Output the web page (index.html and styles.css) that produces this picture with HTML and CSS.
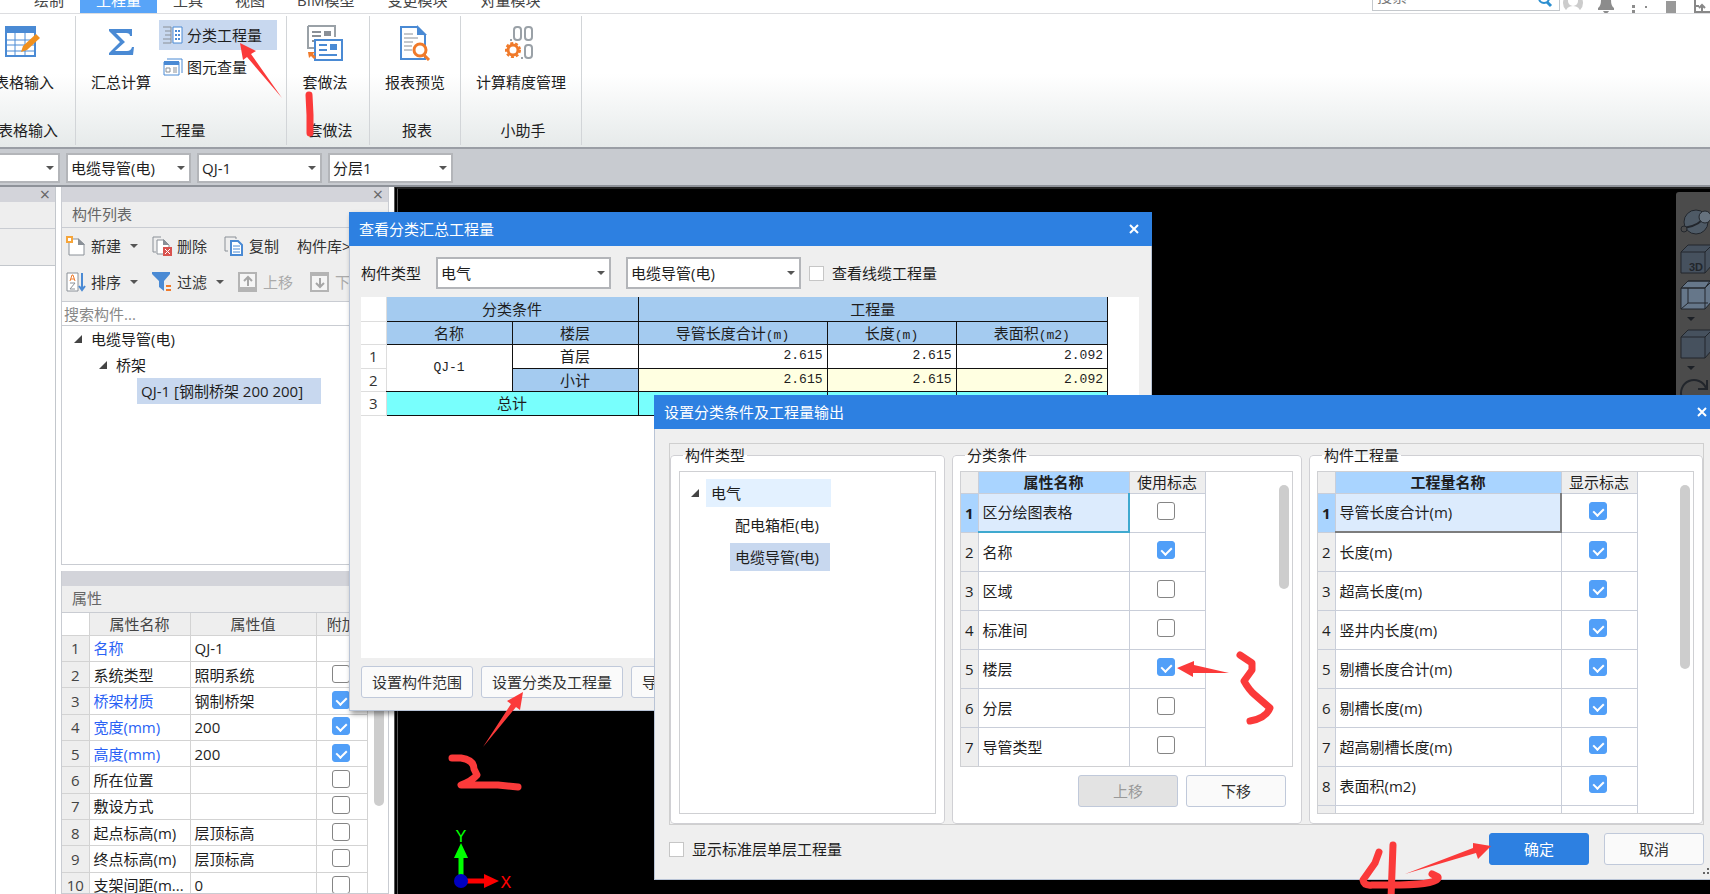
FILE: index.html
```html
<!DOCTYPE html>
<html lang="zh-CN">
<head>
<meta charset="utf-8">
<title>查看分类汇总工程量</title>
<link rel="stylesheet" href="styles.css">
</head>
<body>
<div class="app">
  <header class="tabs">
    <nav class="tab-list">
      <button class="tab tab-first">绘制</button>
      <button class="tab tab-active">工程量</button>
      <button class="tab">工具</button>
      <button class="tab">视图</button>
      <button class="tab">BIM模型</button>
      <button class="tab">变更模块</button>
      <button class="tab">对量模块</button>
    </nav>
    <div class="tab-tools">
      <div class="top-search">
        <input class="top-input" type="text" placeholder="搜索" aria-label="搜索">
        <svg width="16" height="16" viewBox="0 0 16 16"><circle cx="7" cy="6" r="5" fill="none" stroke="#2b8fd0" stroke-width="2"/><path d="M10 10l4 4" stroke="#2b8fd0" stroke-width="3"/></svg>
      </div>
      <svg class="top-icons" width="150" height="20" viewBox="0 0 150 20">
        <circle cx="13" cy="6" r="10" fill="#ccc"/><circle cx="13" cy="4" r="5" fill="#fff"/><path d="M5 17q1-8 8-8t8 8z" fill="#fff"/>
        <path d="M38 11q3-2 3-8h10q0 6 3 8v2H38zM43 14h6q-3 5-6 0z" fill="#8c8c8c"/>
        <path d="M72 8h3v3h-3zM72 13h3v3h-3zM85 9h2v2h-2z" fill="#8c8c8c"/>
        <path d="M106 4h10v12h-10z" fill="#999"/>
        <path d="M135 1v14h16M135 9h4M142 15V8m-3 3l3-3 3 3" fill="none" stroke="#888" stroke-width="2"/>
      </svg>
    </div>
  </header>

  <section class="ribbon">
    <div class="group group-a">
      <div class="group-row">
        <button class="big">
          <svg width="36" height="32" viewBox="0 0 36 32"><path d="M1 2h29v29H1z" fill="#fff" stroke="#4a8ad4" stroke-width="2"/><path d="M0 1h31v7H0z" fill="#4a8ad4"/><path d="M1 15h29M1 20h29M1 26h29M10 8v22M20 8v22" stroke="#4a8ad4" stroke-width="1"/><path d="M16 27l2-6L31 9l4 4-13 12z" fill="#f0901e"/></svg>
          <span>表格输入</span>
        </button>
      </div>
      <div class="group-name">表格输入</div>
    </div>
    <div class="group group-b">
      <div class="group-row">
        <button class="big">
          <svg width="36" height="32" viewBox="0 0 36 32"><path d="M6 4h23v7h-2q0-3-4-3H13l9 9-10 9h12q4 0 5-4h2l-1 8H6v-2l11-11L6 6z" fill="#4a8ad4"/></svg>
          <span>汇总计算</span>
        </button>
        <div class="small-list">
          <button class="small small-on">
            <svg width="20" height="18" viewBox="0 0 20 18"><path d="M0 1h8M2 5h6M2 9h6M0 13h8M0 17h8M8 1v16" stroke="#8a9097" stroke-width="1" fill="none"/><path d="M10 1h9v16h-9z" fill="#fff" stroke="#4a8ad4" stroke-width="1"/><path d="M12 4h2v2h-2zM15 4h2v2h-2zM12 8h2v2h-2zM15 8h2v2h-2zM12 12h2v2h-2zM15 12h2v2h-2z" fill="#4a8ad4"/></svg>
            <span>分类工程量</span>
          </button>
          <button class="small">
            <svg width="20" height="18" viewBox="0 0 20 18"><path d="M4 1h15v14" fill="none" stroke="#4a8ad4" stroke-width="1"/><path d="M1 4h15v13H1z" fill="#fff" stroke="#4a8ad4" stroke-width="1"/><path d="M1 3h15v4H1z" fill="#4a8ad4"/><path d="M3 10h4v4H3zM10 10h4M10 12h4M10 14h4" fill="none" stroke="#8a9097"/></svg>
            <span>图元查量</span>
          </button>
        </div>
      </div>
      <div class="group-name">工程量</div>
    </div>
    <div class="group group-c">
      <div class="group-row">
        <button class="big">
          <svg width="36" height="36" viewBox="0 0 36 36"><path d="M1 1h27v11M1 1v22h6" fill="#fff" stroke="#9aa1a7" stroke-width="2"/><path d="M5 7h9M5 11h9M5 16h4" stroke="#8a9097" stroke-width="2"/><path d="M17 6h7v5h-7z" fill="#8a9097"/><path d="M8 15h27v20H8z" fill="#fff" stroke="#4a8ad4" stroke-width="2"/><path d="M12 20h8M12 25h8M12 30h18" stroke="#4a8ad4" stroke-width="2"/><path d="M23 19h7v6h-7z" fill="#4a8ad4"/><path d="M1 27h7l-2 2 3 3-2 2-3-3-2 2z" fill="#f07a2a"/></svg>
          <span>套做法</span>
        </button>
      </div>
      <div class="group-name">套做法</div>
    </div>
    <div class="group group-d">
      <div class="group-row">
        <button class="big">
          <svg width="32" height="36" viewBox="0 0 32 36"><path d="M2 2h16l8 8v24H2z" fill="#fff" stroke="#4a8ad4" stroke-width="2"/><path d="M18 0v10h10z" fill="#4a8ad4"/><path d="M5 9h9M5 13h14M5 17h9M5 21h8M5 25h8" stroke="#8a9097" stroke-width="1"/><circle cx="21" cy="25" r="6" fill="#fff" stroke="#f07a2a" stroke-width="3"/><path d="M25 30l5 5" stroke="#f07a2a" stroke-width="3"/></svg>
          <span>报表预览</span>
        </button>
      </div>
      <div class="group-name">报表</div>
    </div>
    <div class="group group-e">
      <div class="group-row">
        <button class="big">
          <svg width="32" height="36" viewBox="0 0 32 36" fill="none" stroke="#9aa1a7" stroke-width="2"><rect x="9" y="2" width="7" height="13" rx="3"/><rect x="20" y="2" width="7" height="13" rx="3"/><rect x="20" y="20" width="7" height="13" rx="3"/><path d="M5 15h2M16 33h2"/><circle cx="8" cy="25" r="5" stroke="#f07a2a" stroke-width="3"/><circle cx="8" cy="25" r="7" stroke="#f07a2a" stroke-width="2" stroke-dasharray="3 2"/></svg>
          <span>计算精度管理</span>
        </button>
      </div>
      <div class="group-name">小助手</div>
    </div>
  </section>

  <section class="filter-bar">
    <div class="combo combo-cut"><select aria-label="楼层"><option></option></select></div>
    <div class="combo"><select aria-label="类型"><option>电缆导管(电)</option></select></div>
    <div class="combo"><select aria-label="构件"><option>QJ-1</option></select></div>
    <div class="combo"><select aria-label="分层"><option>分层1</option></select></div>
  </section>

  <main class="work">
    <aside class="nav-panel">
      <div class="strip"><button class="strip-x" aria-label="关闭">×</button></div>
      <div class="nav-head"></div>
      <div class="nav-tools"></div>
    </aside>

    <div class="side">
      <section class="panel list-panel">
        <div class="strip"><button class="strip-x" aria-label="关闭">×</button></div>
        <h2 class="panel-title">构件列表</h2>
        <div class="tools">
          <div class="tool-row">
            <button class="tool tool-new"><svg width="20" height="20" viewBox="0 0 20 20"><path d="M3 3h9l6 5v11H3z" fill="#fff" stroke="#8a9097"/><path d="M12 2v7h7z" fill="#8a9097"/><path d="M0 0h7v7H0z" fill="#f6a53a"/><path d="M2 2h3v3H2z" fill="#fff"/></svg>新建<i class="caret"></i></button>
            <button class="tool tool-del"><svg width="20" height="20" viewBox="0 0 20 20"><path d="M9 1H1v15h3" fill="none" stroke="#8a9097"/><path d="M5 4h7l5 5v9H5z" fill="#fff" stroke="#8a9097"/><path d="M11 3v6h6z" fill="#8a9097"/><path d="M11 11h9v9h-9z" fill="#d9534f"/><path d="M13 13l5 5m0-5l-5 5" stroke="#fff"/></svg>删除</button>
            <button class="tool tool-copy"><svg width="20" height="20" viewBox="0 0 20 20"><path d="M12 3V1H1v14h3" fill="none" stroke="#8a9097"/><path d="M7 5h7l4 4v10H7z" fill="#fff" stroke="#4a8ad4" stroke-width="2"/><path d="M9 10h7M9 13h7M9 16h7" stroke="#4a8ad4"/></svg>复制</button>
            <button class="tool">构件库&gt;&gt;</button>
          </div>
          <div class="tool-row">
            <button class="tool tool-new"><svg width="20" height="20" viewBox="0 0 20 20"><path d="M1 1h11v18H1z" fill="#fff" stroke="#8a9097"/><path d="M4 9l2-6h1l2 6M5 7h3" fill="none" stroke="#f07a2a"/><path d="M4 11h5l-5 6h5" fill="none" stroke="#8a9097"/><path d="M16 1v16m-3-3l3 4 3-4" fill="none" stroke="#4a8ad4" stroke-width="2"/></svg>排序<i class="caret"></i></button>
            <button class="tool tool-filter"><svg width="20" height="20" viewBox="0 0 20 20"><path d="M0 0h18v2l-6 7v10l-5-4V9L0 2z" fill="#4a8ad4"/><path d="M14 14h5M14 18h5" stroke="#f07a2a" stroke-width="2"/></svg>过滤<i class="caret"></i></button>
            <button class="tool tool-up" disabled><svg width="20" height="20" viewBox="0 0 20 20"><path d="M1 1h17v18H1z" fill="#f5f5f5" stroke="#b4b4b4" stroke-width="2"/><path d="M0 15h19v4H0z" fill="#b4b4b4"/><path d="M10 14V5m-4 4l4-4 4 4" fill="none" stroke="#a6a6a6" stroke-width="2"/></svg>上移</button>
            <button class="tool" disabled><svg width="20" height="20" viewBox="0 0 20 20"><path d="M1 1h17v18H1z" fill="#f5f5f5" stroke="#b4b4b4" stroke-width="2"/><path d="M0 0h19v4H0z" fill="#b4b4b4"/><path d="M10 6v9m-4-4l4 4 4-4" fill="none" stroke="#a6a6a6" stroke-width="2"/></svg>下移</button>
          </div>
        </div>
        <input class="find" type="text" placeholder="搜索构件..." aria-label="搜索构件">
        <ul class="tree">
          <li class="node lv1"><i class="fold"></i><span>电缆导管(电)</span></li>
          <li class="node lv2"><i class="fold"></i><span>桥架</span></li>
          <li class="node lv3"><span class="picked">QJ-1 [钢制桥架 200 200]</span></li>
        </ul>
      </section>

      <section class="panel prop-panel">
        <div class="strip"></div>
        <h2 class="panel-title">属性</h2>
        <div class="prop-body">
          <table class="props">
            <colgroup><col class="p-num"><col class="p-name"><col class="p-value"><col class="p-flag"></colgroup>
            <thead><tr><td></td><th>属性名称</th><th>属性值</th><th>附加</th></tr></thead>
            <tbody>
              <tr><th>1</th><td class="key">名称</td><td>QJ-1</td><td></td></tr>
              <tr><th>2</th><td>系统类型</td><td>照明系统</td><td class="mid"><input type="checkbox" class="box" aria-label="系统类型"></td></tr>
              <tr><th>3</th><td class="key">桥架材质</td><td>钢制桥架</td><td class="mid"><input type="checkbox" class="box" aria-label="桥架材质" checked></td></tr>
              <tr><th>4</th><td class="key">宽度(mm)</td><td>200</td><td class="mid"><input type="checkbox" class="box" aria-label="宽度" checked></td></tr>
              <tr><th>5</th><td class="key">高度(mm)</td><td>200</td><td class="mid"><input type="checkbox" class="box" aria-label="高度" checked></td></tr>
              <tr><th>6</th><td>所在位置</td><td></td><td class="mid"><input type="checkbox" class="box" aria-label="所在位置"></td></tr>
              <tr><th>7</th><td>敷设方式</td><td></td><td class="mid"><input type="checkbox" class="box" aria-label="敷设方式"></td></tr>
              <tr><th>8</th><td>起点标高(m)</td><td>层顶标高</td><td class="mid"><input type="checkbox" class="box" aria-label="起点标高"></td></tr>
              <tr><th>9</th><td>终点标高(m)</td><td>层顶标高</td><td class="mid"><input type="checkbox" class="box" aria-label="终点标高"></td></tr>
              <tr><th>10</th><td>支架间距(m...</td><td>0</td><td class="mid"><input type="checkbox" class="box" aria-label="支架间距"></td></tr>
            </tbody>
          </table>
          <div class="track"><div class="thumb thumb-prop"></div></div>
        </div>
      </section>
    </div>

    <section class="canvas">
      <svg class="axis" width="70" height="80" viewBox="0 0 70 80">
        <path d="M13 43V62" stroke="#0f0" stroke-width="5"/><path d="M13 29l7 15H6z" fill="#0f0"/>
        <path d="M19 67h18" stroke="#f00" stroke-width="5"/><path d="M51 67l-15 7V60z" fill="#f00"/>
        <circle cx="13" cy="67" r="7" fill="#0000c0"/>
        <text x="13" y="28" text-anchor="middle" class="axis-name" fill="#0f0">Y</text>
        <text x="58" y="74" text-anchor="middle" class="axis-name" fill="#f00">X</text>
      </svg>
      <svg class="view-tools" width="34" height="208" viewBox="0 0 34 208">
        <path d="M0 3q0-3 3-3h31v208H0z" fill="#4b4b4b"/>
        <g stroke="#22262c" stroke-width="1">
          <circle cx="20" cy="30" r="12" fill="#4e5a66"/><path d="M8 36Q24 34 31 22" fill="none" stroke-width="2"/><circle cx="29" cy="25" r="6" fill="#66727e"/><circle cx="8" cy="37" r="3" fill="#4b4b4b"/>
          <path d="M5 60l7-7h24v20l-7 8H5z" fill="#46515e"/><path d="M5 60h24v21M29 60l7-7" fill="none"/>
          <path d="M5 96l7-7h24v20l-7 8H5z" fill="#66778a"/><path d="M5 96h24v21M29 96l7-7M12 96v15h20M12 111l-7 6M5 96l7-7h22l-5 7z" fill="none"/>
          <path d="M5 145l7-7h24v20l-7 8H5z" fill="#46515e"/><path d="M5 145h24v21M29 145l7-7" fill="none"/>
        </g>
        <path d="M11 125h8l-4 4zM11 174h8l-4 4z" fill="#1c2026"/>
        <path d="M6 206a13 13 0 0 1 24-10M31 188v9h-9" fill="none" stroke="#22262c" stroke-width="2"/>
        <text x="13" y="79" class="cube-name">3D</text>
      </svg>
    </section>
  </main>

  <section class="dialog summary" role="dialog" aria-label="查看分类汇总工程量">
    <header class="dialog-title"><h1>查看分类汇总工程量</h1><button class="close" aria-label="关闭"><svg width="10" height="10" viewBox="0 0 10 10"><path d="M1 1l8 8M9 1L1 9" stroke="#fff" stroke-width="2"/></svg></button></header>
    <div class="summary-body">
      <div class="summary-filter">
        <label for="kind">构件类型</label>
        <div class="combo combo-l"><select id="kind"><option>电气</option></select></div>
        <div class="combo combo-r"><select aria-label="子类型"><option>电缆导管(电)</option></select></div>
        <label class="check"><input type="checkbox" class="flat">查看线缆工程量</label>
      </div>
      <div class="sheet-wrap">
        <table class="sheet">
          <colgroup><col class="s-num"><col class="s-a"><col class="s-a"><col class="s-b"><col class="s-c"><col class="s-d"></colgroup>
          <tbody>
            <tr><th class="no"></th><th class="hd" colspan="2">分类条件</th><th class="hd" colspan="3">工程量</th></tr>
            <tr><th class="no"></th><th class="hd">名称</th><th class="hd">楼层</th><th class="hd">导管长度合计<span class="mono">(m)</span></th><th class="hd">长度<span class="mono">(m)</span></th><th class="hd">表面积<span class="mono">(m2)</span></th></tr>
            <tr><th class="no">1</th><td rowspan="2" class="mono">QJ-1</td><td>首层</td><td class="num">2.615</td><td class="num">2.615</td><td class="num">2.092</td></tr>
            <tr><th class="no">2</th><td class="hd">小计</td><td class="num sub">2.615</td><td class="num sub">2.615</td><td class="num sub">2.092</td></tr>
            <tr class="total"><th class="no">3</th><td colspan="2">总计</td><td></td><td></td><td></td></tr>
          </tbody>
        </table>
      </div>
      <div class="summary-actions">
        <button class="btn btn-fit">设置构件范围</button>
        <button class="btn btn-fit">设置分类及工程量</button>
        <button class="btn btn-fit">导出到Excel</button>
      </div>
    </div>
  </section>

  <section class="dialog setup" role="dialog" aria-label="设置分类条件及工程量输出">
    <header class="dialog-title"><h1>设置分类条件及工程量输出</h1><button class="close close-edge" aria-label="关闭"><svg width="10" height="10" viewBox="0 0 10 10"><path d="M1 1l8 8M9 1L1 9" stroke="#fff" stroke-width="2"/></svg></button></header>
    <div class="setup-body">
      <div class="trio">
        <fieldset class="set set-1">
          <legend>构件类型</legend>
          <ul class="pane types">
            <li class="type"><i class="fold"></i><span class="hover">电气</span></li>
            <li class="type type-sub"><span>配电箱柜(电)</span></li>
            <li class="type type-sub"><span class="picked">电缆导管(电)</span></li>
          </ul>
        </fieldset>
        <fieldset class="set set-2">
          <legend>分类条件</legend>
          <div class="pane grid-pane grid-short">
            <table class="grid">
              <colgroup><col class="g-num"><col class="g-cond"><col class="g-flag"></colgroup>
              <thead><tr><td></td><th class="on">属性名称</th><th>使用标志</th></tr></thead>
              <tbody>
                <tr class="cur"><th>1</th><td>区分绘图表格</td><td class="mid"><input type="checkbox" class="box" aria-label="区分绘图表格"></td></tr>
                <tr><th>2</th><td>名称</td><td class="mid"><input type="checkbox" class="box" aria-label="名称" checked></td></tr>
                <tr><th>3</th><td>区域</td><td class="mid"><input type="checkbox" class="box" aria-label="区域"></td></tr>
                <tr><th>4</th><td>标准间</td><td class="mid"><input type="checkbox" class="box" aria-label="标准间"></td></tr>
                <tr><th>5</th><td>楼层</td><td class="mid"><input type="checkbox" class="box" aria-label="楼层" checked></td></tr>
                <tr><th>6</th><td>分层</td><td class="mid"><input type="checkbox" class="box" aria-label="分层"></td></tr>
                <tr><th>7</th><td>导管类型</td><td class="mid"><input type="checkbox" class="box" aria-label="导管类型"></td></tr>
              </tbody>
            </table>
            <div class="track"><div class="thumb thumb-cond"></div></div>
          </div>
          <div class="order">
            <button class="btn" disabled>上移</button>
            <button class="btn">下移</button>
          </div>
        </fieldset>
        <fieldset class="set set-3">
          <legend>构件工程量</legend>
          <div class="pane grid-pane">
            <table class="grid grid-gray">
              <colgroup><col class="g-num"><col class="g-qty"><col class="g-flag"></colgroup>
              <thead><tr><td></td><th class="on">工程量名称</th><th>显示标志</th></tr></thead>
              <tbody>
                <tr class="cur"><th>1</th><td>导管长度合计(m)</td><td class="mid"><input type="checkbox" class="box" aria-label="导管长度合计" checked></td></tr>
                <tr><th>2</th><td>长度(m)</td><td class="mid"><input type="checkbox" class="box" aria-label="长度" checked></td></tr>
                <tr><th>3</th><td>超高长度(m)</td><td class="mid"><input type="checkbox" class="box" aria-label="超高长度" checked></td></tr>
                <tr><th>4</th><td>竖井内长度(m)</td><td class="mid"><input type="checkbox" class="box" aria-label="竖井内长度" checked></td></tr>
                <tr><th>5</th><td>剔槽长度合计(m)</td><td class="mid"><input type="checkbox" class="box" aria-label="剔槽长度合计" checked></td></tr>
                <tr><th>6</th><td>剔槽长度(m)</td><td class="mid"><input type="checkbox" class="box" aria-label="剔槽长度" checked></td></tr>
                <tr><th>7</th><td>超高剔槽长度(m)</td><td class="mid"><input type="checkbox" class="box" aria-label="超高剔槽长度" checked></td></tr>
                <tr><th>8</th><td>表面积(m2)</td><td class="mid"><input type="checkbox" class="box" aria-label="表面积" checked></td></tr>
                <tr><th></th><td></td><td></td></tr>
              </tbody>
            </table>
            <div class="track"><div class="thumb thumb-qty"></div></div>
          </div>
        </fieldset>
      </div>
      <div class="setup-foot">
        <label class="check"><input type="checkbox" class="flat">显示标准层单层工程量</label>
        <div class="foot-actions">
          <button class="btn btn-main">确定</button>
          <button class="btn">取消</button>
        </div>
      </div>
    </div>
    <svg class="grip" width="8" height="8" viewBox="0 0 8 8"><path d="M1 5h2v2H1zM5 5h2v2H5zM5 1h2v2H5z" fill="#666"/></svg>
  </section>

  <svg class="marks" width="1710" height="894" viewBox="0 0 1710 894">
    <g fill="#fb3a3a">
      <path d="M240 43L256 51L251 54L282 98L247 57L243 60z"/>
      <path d="M523 692L507 701L511 704L483 747L516 707L520 710z"/>
      <path d="M1177 668L1194 661V665L1229 673L1193 673V677z"/>
      <path d="M1491 846L1473 843V848L1405 874L1476 853L1478 859z"/>
    </g>
    <g fill="none" stroke="#fb3a3a" stroke-width="7" stroke-linecap="round" stroke-linejoin="round">
      <path d="M309 95L310 115L310 133"/>
      <path d="M452 758h9Q474 760 474 769L477 775Q472 781 461 785L498 785L518 787"/>
      <path d="M1240 655L1252 663V670L1244 681Q1249 690 1255 695L1270 708Q1266 718 1250 721"/>
      <path d="M1379 852L1375 863L1363 880Q1364 886 1372 885L1400 885Q1440 884 1438 877L1432 874M1393 845L1391 898"/>
    </g>
  </svg>
</div>
</body>
</html>
```
FILE: styles.css
```css
* { box-sizing: border-box; }
body {
  margin: 0;
  font: 15px/20px "Open Sans", "Noto Sans CJK SC", sans-serif;
  color: #1e1e1e;
  overflow: hidden;
}
button, input, select { font: inherit; color: inherit; margin: 0; }
button { border: 0; padding: 0; background: none; white-space: nowrap; }
svg { display: block; flex: none; }
h1, h2 { margin: 0; font-size: 15px; font-weight: 400; }
ul { margin: 0; padding: 0; list-style: none; }
.app { position: relative; height: 100vh; display: flex; flex-direction: column; overflow: hidden; background: #fff; }

/* top tab strip */
.tabs { display: flex; justify-content: space-between; align-items: flex-end; height: 14px; flex: none; border-bottom: 1px solid #dcdde0; overflow: hidden; }
.tab-list { display: flex; }
.tab { height: 26px; line-height: 26px; padding: 0 16px; color: #444; }
.tab-first { margin-left: 18px; }
.tab-active { background: #58a4f8; color: #fff; }
.tab:nth-child(n+5) { padding-right: 17px; }
.tab-tools { display: flex; align-items: flex-end; }
.top-search { display: flex; width: 188px; height: 26px; align-items: flex-end; border: 1px solid #c4c8cc; margin-bottom: 2px; padding: 0 6px 4px 4px; }
.top-search svg { margin-bottom: -2px; }
.top-input { flex: 1; min-width: 0; border: 0; padding: 0; outline: 0; height: 20px; }
.top-input::placeholder { color: #777; }
.top-icons { margin-bottom: -4px; }

/* ribbon */
.ribbon { display: flex; height: 135px; flex: none; padding: 2px 0; background: linear-gradient(#fff 45%, #e6eaea); border-bottom: 2px solid #9a9ea5; }
.group { display: flex; flex-direction: column; justify-content: space-between; border-right: 1px solid #d2d5d8; height: 129px; }
.group-row { display: flex; justify-content: center; }
.group-name { text-align: center; padding: 0 0 5px 4px; }
.group-a { width: 76px; }
.group-a .group-row { justify-content: flex-end; padding-right: 21px; }
.group-a .group-name { display: flex; justify-content: flex-end; padding-right: 17px; white-space: nowrap; }
.group-a .big { align-items: flex-end; }
.group-a .big svg { margin-right: 13px; }
.group-b { width: 211px; }
.group-b .group-row { padding-left: 6px; }
.group-c { width: 83px; }
.group-c .group-row { padding-right: 6px; }
.group-d { width: 91px; }
.group-e { width: 121px; }
.big { display: flex; flex-direction: column; align-items: center; height: 84px; justify-content: space-between; padding: 9px 0 8px; }
.small-list { display: flex; flex-direction: column; padding: 4px 0 0 8px; gap: 2px; }
.small { display: flex; align-items: center; gap: 4px; height: 30px; padding: 0 15px 0 4px; }
.small-on { background: #c8d8ef; }

/* combos */
.filter-bar { display: flex; gap: 6px; height: 38px; flex: none; padding: 4px 0; background: #c8cbd0; border-bottom: 2px solid #8e9299; }
.combo { position: relative; width: 125px; height: 30px; background: #fff; border: 2px solid #b3b5b9; }
.combo select { appearance: none; width: 100%; height: 100%; border: 0; padding: 0 20px 0 3px; background: none; outline: 0; }
.combo::after { content: ""; position: absolute; right: 4px; top: 11px; border: 4px solid transparent; border-top-color: #555; border-bottom: 0; }
.combo-cut { width: 60px; border-left: 0; }

/* docked panels */
.work { display: flex; flex: 1; min-height: 0; }
.strip { height: 15px; flex: none; background: #d3d4da; display: flex; justify-content: flex-end; padding-right: 4px; }
.strip-x { font-size: 18px; line-height: 12px; height: 14px; color: #666; width: 12px; }
.nav-panel { width: 56px; border-right: 1px solid #c3c7cc; }
.nav-head { height: 27px; background: #eee; border-bottom: 1px solid #c9ccd2; }
.nav-tools { height: 37px; background: #eee; border-bottom: 1px solid #c3c7cc; }
.side { width: 328px; margin-left: 5px; display: flex; flex-direction: column; gap: 6px; flex: none; }
.panel { border: 1px solid #c9ccd2; border-top: 0; background: #fff; display: flex; flex-direction: column; min-height: 0; }
.list-panel { height: 378px; flex: none; }
.panel-title { height: 26px; line-height: 25px; padding-left: 10px; background: #eee; color: #666; border-bottom: 1px solid #c9ccd2; flex: none; }
.prop-panel .panel-title { height: 27px; }
.tools { height: 73px; flex: none; background: #eee; overflow: hidden; }
.tool-row { display: flex; padding-left: 4px; height: 36px; align-items: center; }
.tool { display: flex; align-items: center; gap: 5px; color: #333; }
.tool:disabled { color: #aaa; }
.tool-new { width: 86px; }
.tool-del { width: 72px; }
.tool-copy { width: 73px; }
.tool-filter { width: 86px; }
.tool-up { width: 72px; }
.caret { border: 4px solid transparent; border-top-color: #555; border-bottom: 0; margin-left: 4px; }
.find { height: 25px; flex: none; border: 1px solid #c9ccd2; border-width: 1px 0; padding: 0 2px; background: #fff; outline: 0; }
.find::placeholder { color: #888; }
.fold { width: 0; height: 0; border: 4px solid transparent; border-right-color: #444; border-bottom-color: #444; flex: none; }
.node { display: flex; align-items: center; height: 26px; gap: 9px; }
.node span { line-height: 26px; white-space: nowrap; }
.lv1 { padding-left: 12px; }
.lv2 { padding-left: 37px; }
.lv3 { padding-left: 75px; }
.lv3 .picked { width: 184px; padding-left: 4px; }
.picked { background: #c8d8ef; }
.prop-panel { flex: 1; overflow: hidden; }
.prop-body { display: flex; }

/* property grid */
table { border-collapse: collapse; table-layout: fixed; }
th { font-weight: 400; padding: 0; }
td { padding: 0 0 0 4px; white-space: nowrap; }
.mid { text-align: center; padding: 0; }
.props { width: 306px; height: 286px; flex: none; }
.props td, .props th { border: 1px solid #d3d3d3; border-left: 0; border-top: 0; }
.props thead tr { height: 22px; }
.props tbody tr { height: 26px; }
.props th { background: #eee; color: #444; }
.p-num { width: 27px; }
.p-name { width: 101px; }
.p-value { width: 126px; }
.key { color: #2a62f5; }
.track { flex: 1; display: flex; justify-content: center; }
.prop-body .track { padding-left: 2px; }
.thumb { width: 10px; border-radius: 5px; background: #cdcdcd; }
.thumb-prop { height: 193px; }
.box { appearance: none; display: inline-block; width: 18px; height: 18px; border: 1px solid #858585; border-radius: 3px; background: #fff; vertical-align: middle; position: relative; }
.mid .box { margin: 0 2px 3px 0; }
.box:checked { background: #519ff8; border-color: #519ff8; }
.box:checked::after { content: ""; position: absolute; left: 5px; top: 3px; width: 5px; height: 8px; border: solid #fff; border-width: 0 2px 2px 0; transform: rotate(45deg); }
.flat { appearance: none; width: 15px; height: 15px; border: 1px solid #c6c6c6; background: #fff; }
.check { display: flex; align-items: center; gap: 8px; }

/* drawing area */
.canvas { position: relative; flex: 1; margin-left: 5px; background: #000; border-left: 4px double #555; border-top: 2px solid #222; }
.axis { position: absolute; left: 50px; bottom: 0; }
.axis-name { font: 18px "Liberation Mono", monospace; }
.view-tools { position: absolute; right: 0; top: 3px; }
.cube-name { font: bold 11px "Liberation Sans", sans-serif; fill: #22262c; }

/* dialogs */
.dialog { position: absolute; display: flex; flex-direction: column; background: #efefef; border: 1px solid #b9c4d6; border-top: 0; }
.dialog-title { display: flex; align-items: center; justify-content: space-between; height: 34px; flex: none; margin: 0 -1px; padding: 0 13px 0 10px; background: #2d80e1; color: #fff; }
.summary { left: 349px; top: 212px; width: 803px; height: 499px; box-shadow: 2px 3px 5px rgba(0, 0, 0, 0.4); }
.summary-body { flex: 1; display: flex; flex-direction: column; padding: 11px 12px 12px 11px; min-height: 0; }
.summary-filter { display: flex; align-items: center; height: 32px; flex: none; }
.summary-filter .combo { width: 175px; height: 32px; }
.summary-filter .combo::after { top: 12px; }
.combo-l { margin: 0 15px 0 15px; }
.combo-r { margin-right: 8px; }
.sheet-wrap { flex: 1; background: #fff; margin: 8px 0; min-height: 0; overflow: hidden; }
.sheet { width: 747px; }
.s-num { width: 25px; }
.s-a { width: 126px; }
.s-b { width: 189px; }
.s-c { width: 129px; }
.sheet tr { height: 24px; }
.sheet tr:nth-child(even) { height: 23px; }
.sheet td, .sheet .hd { border: 1px solid #111; border-left-width: 0; border-top: 0; padding: 0; text-align: center; line-height: 22px; }
.sheet .no { border: 1px solid #ddd; border-left: 0; border-top: 0; line-height: 22px; color: #333; }
.sheet .hd { background: #a4cbf0; }
.sheet .sub { background: #ffffe1; }
.sheet .total td { background: #78fffd; }
.mono, .sheet .num { font-family: "Liberation Mono", monospace; font-size: 13px; }
.hd .mono { line-height: 16px; }
.sheet .num { text-align: right; padding-right: 4px; }
.summary-actions { display: flex; gap: 8px; height: 32px; flex: none; overflow: hidden; }
.btn { width: 100px; height: 32px; border: 1px solid #c0c9da; border-radius: 3px; background: #fafafa; color: #333; }
.btn:disabled { background: #e3e3e3; color: #999; }
.btn-fit { width: auto; padding: 0 10px; flex: none; }
.btn-main { background: #2d80e1; border-color: #2d80e1; color: #fff; }

.setup { left: 654px; right: 0; top: 395px; border-right: 0; }
.close-edge { margin-right: -9px; }
.setup-body { padding: 14px 6px 14px 14px; display: flex; flex-direction: column; gap: 8px; }
.trio { display: flex; gap: 7px; height: 382px; border: 1px solid #cfcfcf; }
.set { min-width: 0; margin: 1px 0 0; padding: 6px 8px 9px 7px; border: 1px solid #d0d0d4; border-radius: 4px; background: #fff; display: flex; flex-direction: column; }
.set legend { margin-left: 5px; padding: 0 2px; line-height: 20px; }
.set-1 { width: 275px; padding-left: 8px; }
.set-1 legend { margin-left: 4px; }
.set-2 { width: 350px; }
.set-3 { flex: 1; }
.pane { border: 1px solid #cfd0d3; background: #fff; height: 343px; overflow: hidden; }
.types { padding-top: 5px; }
.type { display: flex; align-items: center; height: 32px; padding-left: 11px; gap: 7px; }
.type span { line-height: 28px; padding: 0 5px; }
.type .hover { width: 125px; background: #e3f1ff; }
.type-sub { padding-left: 50px; }
.type-sub span { width: 100px; white-space: nowrap; }
.grid-pane { display: flex; }
.grid-short { height: 296px; }
.grid { flex: none; align-self: flex-start; }
.grid thead tr { height: 21px; }
.grid tbody tr { height: 39px; }
.grid td, .grid th { border: 1px solid #c9ced9; border-left: 0; border-top: 0; line-height: 18px; }
.grid th, .grid thead td { background: #eee; }
.grid thead .on { background: #a9d4ff; font-weight: 700; }
.g-num { width: 17px; }
.g-cond { width: 151px; }
.g-qty { width: 226px; }
.g-flag { width: 76px; }
.grid:not(.grid-gray) { width: 244px; }
.grid-gray { width: 319px; }
.grid .cur th { background: #a9d4ff; font-weight: 700; }
.grid .cur td:nth-child(2) { background: #dcebfd; border-right: 2px solid #3fa9cf; border-bottom: 2px solid #3fa9cf; }
.grid-gray .cur td:nth-child(2) { border-color: #7d7d7d; }
.grid-pane .track { justify-content: flex-end; padding: 13px 3px 0 0; }
.thumb-cond { height: 104px; }
.thumb-qty { height: 184px; }
.order { display: flex; justify-content: flex-end; gap: 8px; padding: 8px 7px 0 0; }
.setup-foot { display: flex; justify-content: space-between; align-items: center; height: 32px; }
.foot-actions { display: flex; gap: 15px; }
.grip { position: absolute; right: 0; bottom: 4px; }

/* red pen marks above everything */
.marks { position: absolute; left: 0; top: 0; pointer-events: none; }
```
